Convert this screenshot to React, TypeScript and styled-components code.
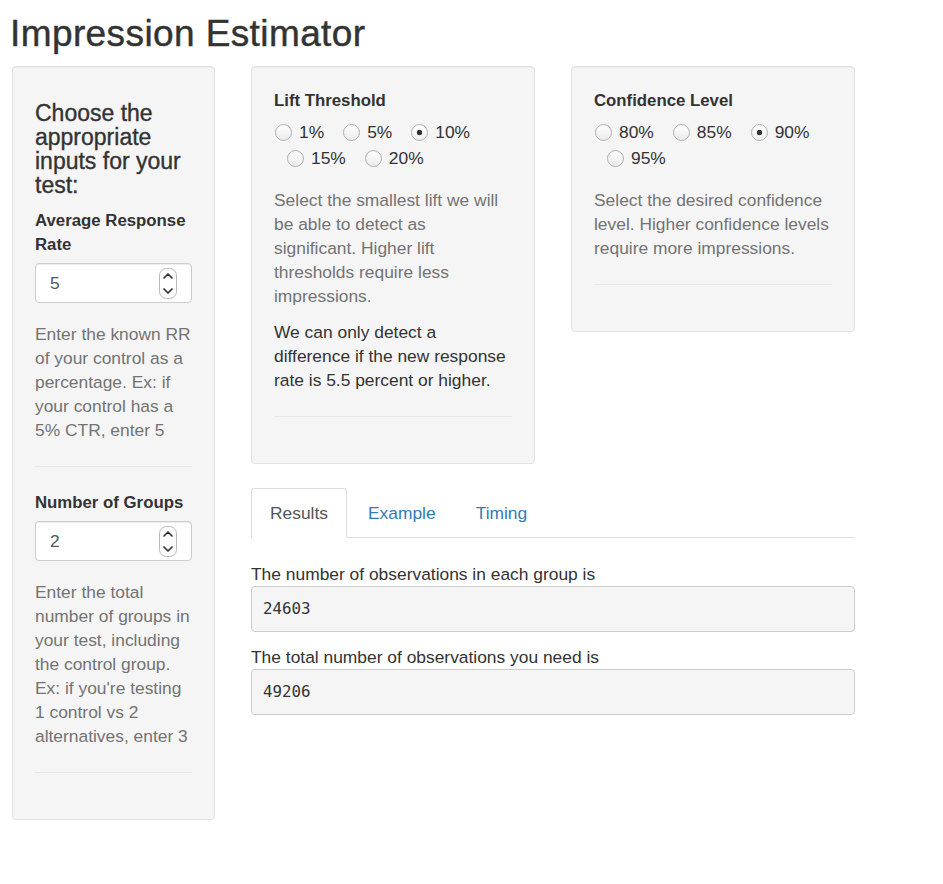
import React from 'react';
import styled, { createGlobalStyle } from 'styled-components';

const GlobalStyle = createGlobalStyle`
  body {
    margin: 0;
    background: #fff;
    color: #333;
    font-family: "Liberation Sans", Arial, Helvetica, sans-serif;
    font-size: 17.4px;
    line-height: 24px;
  }
  * {
    box-sizing: border-box;
  }
`;

const Page = styled.div`
  width: 855px;
  padding-left: 12px;
`;

const Title = styled.h2`
  margin: 13px 0 12px -2px;
  font-size: 37px;
  line-height: 41px;
  font-weight: 400;
  letter-spacing: 0.4px;
  color: #333;
  -webkit-text-stroke: 0.45px #333;
`;

const Layout = styled.div`
  display: grid;
  grid-template-columns: 203px 604px;
  column-gap: 36px;
  align-items: start;
`;

const Well = styled.div`
  background: #f5f5f5;
  border: 1px solid #e3e3e3;
  border-radius: 4px;
  box-shadow: inset 0 1px 1px rgba(0, 0, 0, 0.05);
  padding: 22px;
`;

const SideTitle = styled.h4`
  margin: 12px 0;
  font-size: 23px;
  line-height: 24px;
  font-weight: 400;
  color: #333;
  -webkit-text-stroke: 0.35px #333;
`;

const FieldLabel = styled.label`
  display: block;
  margin-bottom: 6px;
  font-size: 16.8px;
  font-weight: 700;
  line-height: 24px;
`;

const NumberBox = styled.div`
  display: flex;
  align-items: center;
  justify-content: space-between;
  height: 40px;
  padding: 0 14px;
  background: #fff;
  border: 1px solid #ccc;
  border-radius: 4px;
  box-shadow: inset 0 1px 1px rgba(0, 0, 0, 0.075);
  color: #555;
`;

const HelpText = styled.p<{ $gap?: number }>`
  margin: ${(p) => p.$gap ?? 19}px 0 0;
  color: #737373;
`;

const Note = styled.p`
  margin: 12px 0 0;
  color: #333;
`;

const Divider = styled.hr`
  margin: 24px 0;
  border: 0;
  border-top: 1px solid #e8e8e8;
`;

const Main = styled.div`
  display: flex;
  flex-direction: column;
`;

const WellRow = styled.div`
  display: grid;
  grid-template-columns: 284px 284px;
  column-gap: 36px;
  align-items: start;
  margin-bottom: 24px;
`;

const Options = styled.div`
  display: flex;
  flex-wrap: wrap;
`;

const Option = styled.label`
  display: inline-flex;
  align-items: center;
  gap: 7px;
  height: 26px;
  margin-right: 6px;
  padding-left: 1px;
  & + & {
    margin-left: 12px;
  }
`;

const Radio = styled.input`
  appearance: none;
  margin: 0;
  width: 17px;
  height: 17px;
  flex-shrink: 0;
  border-radius: 50%;
  border: 1px solid #b0b0b0;
  background: linear-gradient(#fff, #ebebeb);
  box-shadow: inset 0 1px 1px rgba(0, 0, 0, 0.04);
  &:checked {
    background: radial-gradient(circle at center, #333 0 2.5px, transparent 3.1px),
      linear-gradient(#fff, #f0f0f0);
  }
`;

const TabList = styled.ul`
  display: flex;
  margin: 0;
  padding: 0;
  list-style: none;
  border-bottom: 1px solid #ddd;
`;

const TabItem = styled.li`
  margin: 0 2px -1px 0;
`;

const TabLink = styled.a<{ $active?: boolean }>`
  display: block;
  padding: 12px 18px;
  line-height: 24px;
  border: 1px solid transparent;
  border-color: ${(p) => (p.$active ? '#ddd #ddd transparent' : 'transparent')};
  border-radius: 4px 4px 0 0;
  background: ${(p) => (p.$active ? '#fff' : 'transparent')};
  color: ${(p) => (p.$active ? '#555' : '#337ab7')};
  text-decoration: none;
  cursor: pointer;
`;

const ResultLabel = styled.div<{ $first?: boolean }>`
  margin-top: ${(p) => (p.$first ? 24 : 0)}px;
`;

const Output = styled.pre`
  margin: 0 0 13px;
  padding: 10px 11px;
  background: #f5f5f5;
  border: 1px solid #ccc;
  border-radius: 4px;
  font-family: "DejaVu Sans Mono", "Liberation Mono", monospace;
  font-size: 15.8px;
  line-height: 24px;
  color: #333;
`;

const Stepper = () => (
  <svg width="18" height="31" viewBox="0 0 18 31">
    <rect x="0.5" y="0.5" width="17" height="30" rx="7" fill="#fff" stroke="#b8b8b8" />
    <path d="M5 10 L9 6 L13 10" fill="none" stroke="#333" strokeWidth="1.7" strokeLinecap="round" strokeLinejoin="round" />
    <path d="M5 21 L9 25 L13 21" fill="none" stroke="#333" strokeWidth="1.7" strokeLinecap="round" strokeLinejoin="round" />
  </svg>
);

const NumberField = ({ label, value }: { label: string; value: string }) => (
  <>
    <FieldLabel>{label}</FieldLabel>
    <NumberBox>
      <span>{value}</span>
      <Stepper />
    </NumberBox>
  </>
);

const RadioGroup = ({ name, choices, selected }: { name: string; choices: string[]; selected: string }) => (
  <Options>
    {choices.map((c) => (
      <Option key={c}>
        <Radio type="radio" name={name} defaultChecked={c === selected} />
        <span>{c}</span>
      </Option>
    ))}
  </Options>
);

const tabs = ['Results', 'Example', 'Timing'];

export default function App() {
  return (
    <Page>
      <GlobalStyle />
      <Title>Impression Estimator</Title>
      <Layout>
        <Well>
          <SideTitle>Choose the appropriate inputs for your test:</SideTitle>
          <NumberField label="Average Response Rate" value="5" />
          <HelpText>
            Enter the known RR of your control as a percentage. Ex: if your control has a 5% CTR, enter 5
          </HelpText>
          <Divider />
          <NumberField label="Number of Groups" value="2" />
          <HelpText>
            Enter the total number of groups in your test, including the control group. Ex: if you're testing 1
            control vs 2 alternatives, enter 3
          </HelpText>
          <Divider />
        </Well>

        <Main>
          <WellRow>
            <Well>
              <FieldLabel>Lift Threshold</FieldLabel>
              <RadioGroup name="lift" choices={['1%', '5%', '10%', '15%', '20%']} selected="10%" />
              <HelpText $gap={17}>
                Select the smallest lift we will be able to detect as significant. Higher lift thresholds require
                less impressions.
              </HelpText>
              <Note>We can only detect a difference if the new response rate is 5.5 percent or higher.</Note>
              <Divider />
            </Well>
            <Well>
              <FieldLabel>Confidence Level</FieldLabel>
              <RadioGroup name="confidence" choices={['80%', '85%', '90%', '95%']} selected="90%" />
              <HelpText $gap={17}>
                Select the desired confidence level. Higher confidence levels require more impressions.
              </HelpText>
              <Divider />
            </Well>
          </WellRow>

          <TabList>
            {tabs.map((t) => (
              <TabItem key={t}>
                <TabLink $active={t === 'Results'}>{t}</TabLink>
              </TabItem>
            ))}
          </TabList>

          <ResultLabel $first>The number of observations in each group is</ResultLabel>
          <Output>24603</Output>
          <ResultLabel>The total number of observations you need is</ResultLabel>
          <Output>49206</Output>
        </Main>
      </Layout>
    </Page>
  );
}
